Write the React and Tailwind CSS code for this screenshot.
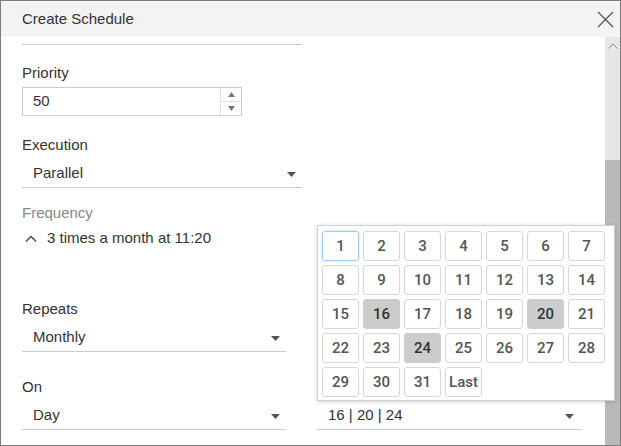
import React from 'react';

const Caret = ({ color = '#555' }) => (
  <svg width="9" height="5" viewBox="0 0 9 5" className="shrink-0">
    <path d="M0 0h9L4.5 5z" fill={color} />
  </svg>
);

const Select = ({ value, width, pr = 'pr-[6px]' }) => (
  <div className={`flex items-end justify-between h-[33px] pb-[4px] pl-[11px] ${pr} border-b border-[#cccccc] ${width}`}>
    <span className="leading-[20px] text-[15px] text-[#333]">{value}</span>
    <div className="pb-[6px]">
      <Caret />
    </div>
  </div>
);

const Label = ({ children, className = '' }) => (
  <div className={`leading-[20px] text-[15px] text-[#333] ${className}`}>{children}</div>
);

const days = [
  ...Array.from({ length: 31 }, (_, i) => String(i + 1)),
  'Last',
];
const picked = ['16', '20', '24'];

export default function App() {
  return (
    <div
      className="relative w-[621px] h-[446px] border border-[#7d7d7d] bg-white flex flex-col overflow-hidden"
      style={{ fontFamily: '"Liberation Sans", Arial, sans-serif' }}
    >
      {/* header */}
      <div className="h-[36px] shrink-0 bg-[#f3f3f3] flex items-center justify-between pl-[21px] pr-[6px]">
        <span className="text-[15px] text-[#333]">Create Schedule</span>
        <svg width="17" height="17" viewBox="0 0 17 17">
          <path d="M1 1L16 16M16 1L1 16" stroke="#555" strokeWidth="1.3" fill="none" />
        </svg>
      </div>

      <div className="flex flex-1 min-h-0">
        {/* form */}
        <div className="flex-1 pl-[21px] flex flex-col">
          <div className="h-[8px] w-[280px] border-b border-[#cccccc]" />

          <Label className="mt-[18px]">Priority</Label>
          <div className="mt-[4px] h-[29px] w-[220px] border border-[#cccccc] flex">
            <div className="flex-1 flex items-center pl-[10px] text-[15px] text-[#333]">50</div>
            <div className="w-[21px] border-l border-[#e0e0e0] flex flex-col">
              <div className="flex-1 flex items-center justify-center border-b border-[#e0e0e0]">
                <svg width="7" height="5" viewBox="0 0 7 5">
                  <path d="M0 5h7L3.5 0z" fill="#777" />
                </svg>
              </div>
              <div className="flex-1 flex items-center justify-center">
                <svg width="7" height="5" viewBox="0 0 7 5">
                  <path d="M0 0h7L3.5 5z" fill="#777" />
                </svg>
              </div>
            </div>
          </div>

          <Label className="mt-[19px]">Execution</Label>
          <Select value="Parallel" width="w-[280px]" />

          <div className="mt-[15px] leading-[20px] text-[15px] text-[#888]">Frequency</div>
          <div className="mt-[5px] flex items-center h-[20px]">
            <svg width="12" height="7" viewBox="0 0 12 7" className="ml-[3px] mr-[10px]">
              <path d="M1 6.5L6 1.5L11 6.5" stroke="#444" strokeWidth="1.4" fill="none" />
            </svg>
            <span className="text-[15px] text-[#333]">3 times a month at 11:20</span>
          </div>

          <div className="flex gap-[31px]">
            <div className="w-[264px] flex flex-col">
              <Label className="mt-[51px]">Repeats</Label>
              <Select value="Monthly" width="w-[264px]" />
              <Label className="mt-[25px]">On</Label>
              <Select value="Day" width="w-[264px]" />
            </div>
            <div className="w-[265px] flex flex-col justify-end">
              <Select value="16 | 20 | 24" width="w-[265px]" pr="pr-[8px]" />
            </div>
          </div>
        </div>

        {/* scrollbar */}
        <div className="w-[15px] shrink-0 bg-[#e6e6e6] flex flex-col">
          <div className="h-[20px] flex items-start justify-center pt-[6px]">
            <svg width="10" height="6" viewBox="0 0 10 6">
              <path d="M0.5 5.5L5 1L9.5 5.5" stroke="#8a8a8a" strokeWidth="1" fill="none" />
            </svg>
          </div>
          <div className="h-[103px]" />
          <div className="flex-1 bg-[#b9b9b9]" />
        </div>
      </div>

      {/* day picker popup */}
      <div className="absolute left-[316px] top-[224px] w-[298px] h-[176px] bg-white border border-[#cfcfcf] shadow-[0_1px_4px_rgba(0,0,0,0.18)] pl-[4px] pt-[5px]">
        <div className="grid grid-cols-[repeat(7,37px)] auto-rows-[30px] gap-[4px]">
          {days.map((d) => {
            const on = picked.includes(d);
            const focus = d === '1';
            return (
              <div
                key={d}
                className={`flex items-center justify-center rounded-[3px] border text-[15px] font-medium ${
                  on
                    ? 'bg-[#cccccc] border-[#cccccc] text-[#333]'
                    : focus
                    ? 'border-[#9fcbef] shadow-[0_0_2px_#9fcbef] text-[#555]'
                    : 'border-[#d6d6d6] text-[#555]'
                }`}
                style={{ fontFamily: 'Roboto, "Liberation Sans", sans-serif' }}
              >
                {d}
              </div>
            );
          })}
        </div>
      </div>
    </div>
  );
}
